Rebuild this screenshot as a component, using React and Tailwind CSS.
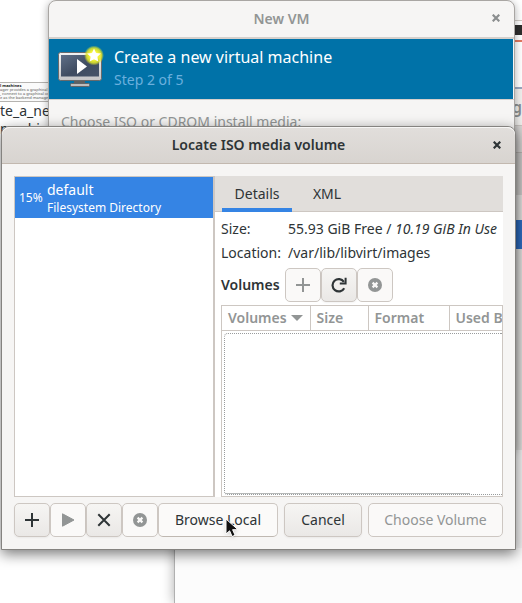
import React from "react";

function CloseIcon() {
  return (
    <svg viewBox="0 0 8 8" className="size-2" fill="none" stroke="currentColor" strokeWidth="2.2" aria-hidden="true">
      <path d="M.7.7 7.3 7.3M7.3.7.7 7.3" />
    </svg>
  );
}

function PlusIcon() {
  return (
    <svg viewBox="0 0 16 16" className="size-4" fill="none" stroke="currentColor" strokeWidth="2" aria-hidden="true">
      <path d="M8 1v14M1 8h14" />
    </svg>
  );
}

function StopIcon() {
  return (
    <svg viewBox="0 0 16 16" className="size-4" aria-hidden="true">
      <circle cx="8" cy="8" r="7" fill="currentColor" />
      <path d="m5.6 5.6 4.8 4.8m0-4.8-4.8 4.8" stroke="#faf9f8" strokeWidth="2.2" />
    </svg>
  );
}

function PlayIcon() {
  return (
    <svg viewBox="0 0 16 16" className="size-4" fill="currentColor" stroke="currentColor" strokeLinejoin="round" aria-hidden="true">
      <path d="M2.500 1.800v12.400L14 8z" />
    </svg>
  );
}

function CrossIcon() {
  return (
    <svg viewBox="0 0 16 16" className="size-4" fill="none" stroke="currentColor" strokeWidth="2" aria-hidden="true">
      <path d="m2.300 2.300 11.400 11.400m0-11.400L2.300 13.700" />
    </svg>
  );
}

function RefreshIcon() {
  return (
    <svg viewBox="0 0 16 16" className="size-4" fill="none" stroke="currentColor" strokeWidth="2.2" aria-hidden="true">
      <path d="M13.200 11.200A6.200 6.200 0 1 1 12.900 4.800" />
      <path d="M15.600.8v6.800H8.800V5.600h4.800V.8z" fill="currentColor" stroke="none" />
    </svg>
  );
}

function MonitorLogo() {
  return (
    <svg viewBox="0 0 48 48" className="size-12 shrink-0" aria-hidden="true">
      <defs>
        <linearGradient id="frame" x1="0" y1="0" x2="0" y2="1">
          <stop offset="0" stopColor="#f4f4f4" />
          <stop offset="1" stopColor="#c4c4c6" />
        </linearGradient>
        <linearGradient id="screen" x1="0" y1="0" x2="1" y2="1">
          <stop offset="0" stopColor="#5f6f87" />
          <stop offset=".55" stopColor="#3f4c61" />
          <stop offset="1" stopColor="#465369" />
        </linearGradient>
        <radialGradient id="glow">
          <stop offset="0" stopColor="#fff" />
          <stop offset=".45" stopColor="#f6f437" />
          <stop offset=".75" stopColor="#dfe62a" stopOpacity=".85" />
          <stop offset="1" stopColor="#dfe62a" stopOpacity="0" />
        </radialGradient>
      </defs>
      <path d="M18 37h11v5H18z" fill="#5d6062" />
      <rect x="14.500" y="40.500" width="19" height="3" rx="1" fill="#bdbdbd" stroke="#626567" />
      <rect x="2.500" y="9.500" width="43" height="28" rx="2" fill="url(#frame)" stroke="#686a6c" />
      <rect x="5" y="12" width="38" height="21.500" fill="url(#screen)" />
      <path d="M21 16v15l10-7.500z" fill="#fff" />
      <circle cx="38" cy="12.500" r="10" fill="url(#glow)" />
      <path d="m38 5.500 2 4.400 4.900.6-3.600 3.300 1 4.800-4.300-2.400-4.300 2.400 1-4.800-3.600-3.300 4.900-.6z" fill="#fff" />
    </svg>
  );
}

function Pointer() {
  return (
    <svg viewBox="0 0 14 20" className="pointer-events-none absolute top-[15px] left-[67px] h-5 w-3.5 drop-shadow" aria-hidden="true">
      <path d="M1 1v15l3.600-3.200 2.500 5.700 3-1.300-2.500-5.500H13z" fill="#111" stroke="#fff" />
    </svg>
  );
}

const button = "flex h-[34px] items-center justify-center rounded-[5px] border ";
const textButton = "pb-0.5 ";
const active = "border-[#cdc7c2] bg-linear-to-b from-[#f6f5f3] to-[#eae8e6] text-[#2e3436] shadow-xs";
const disabled = "border-[#cdc7c2] bg-[#faf9f8] text-[#929595]";

function IconButton({ label, off, children }) {
  return (
    <button type="button" aria-label={label} disabled={off} className={button + "w-9 " + (off ? disabled : active)}>
      {children}
    </button>
  );
}

function Backdrop() {
  return (
    <div className="absolute inset-0 overflow-hidden bg-white">
      <div className="absolute top-[82px] left-0 border-y border-[#b5b3b0] bg-[#fafafa]">
        <div className="h-[18px] pt-px text-[4px] leading-[4px] whitespace-nowrap text-[#555]">
          <b className="text-[#111]">l machines</b>
          <p>ager provides a graphical tool for admin</p>
          <p>, connect to a graphical or serial console</p>
          <p>e as the backend management API.</p>
        </div>
      </div>
      <div className="absolute top-[102px] left-0 text-[14px] leading-[18px] whitespace-nowrap text-[#2e3436]">
        <p>te_a_new</p>
        <p>machine</p>
      </div>
      <div className="absolute top-0 left-[73px] h-2 w-px bg-[#888]" />
      <div className="absolute top-[500px] right-0 bottom-0 left-[174px] border-l border-[#b0b0b0] bg-[#fcfcfc] shadow-[0_0_12px_#0005]" />
      <div className="absolute top-0 right-0 flex h-[548px] w-3 flex-col bg-[#e6e5e3]">
        <div className="h-5 bg-white" />
        <div className="h-[5px] border-t border-[#cfcac5] bg-white" />
        <div className="h-[10px] bg-[#2d2d2d]" />
        <div className="h-[5px] bg-white" />
        <div className="h-[2px] bg-[#e07860]" />
        <div className="h-[47px] border-b-2 border-[#99a7bf] bg-white" />
        <div className="h-[37px] border-b border-[#c9c5c1] bg-[#f0efed] pt-2 pl-0.5 text-[16px] leading-5 font-semibold text-[#8b8e8f]">g</div>
        <div className="h-[27px] border-b border-[#bbb7b3] bg-[#d9d7d5]" />
        <div className="h-[42px] bg-[#cfcdcb]" />
        <div className="h-[25px] bg-[#e6e5e3]" />
        <div className="h-[29px] bg-[#2f6fc5]" />
        <div className="h-[201px]" />
        <div className="grow bg-[#f5f5f5]" />
      </div>
    </div>
  );
}

function NewVmWindow() {
  return (
    <section className="absolute top-0 right-[7px] left-[48px] h-[450px] rounded-t-lg border border-[#a9a6a3] bg-[#f6f5f4] shadow-[0_2px_8px_#0005]">
      <header className="relative flex h-[38px] items-center justify-center border-b-2 border-[#d5d0cc] pb-0.5 text-[14px] font-semibold text-[#929595]">
        <h2>New VM</h2>
        <button type="button" aria-label="Close New VM" className="absolute right-[13px] p-px text-[#8b8e8f]"><CloseIcon /></button>
      </header>
      <div className="mr-px flex h-[60px] gap-2.5 bg-[#0072a8] pt-1 pl-[7px]">
        <MonitorLogo />
        <div className="pt-0.5">
          <h3 className="text-[16px] leading-6 text-white">Create a new virtual machine</h3>
          <p className="text-[14px] leading-[22px] text-[#6bb0de]">Step 2 of 5</p>
        </div>
      </div>
      <p className="border-t border-[#d5d0cc] pt-3 pl-3 text-[14px] leading-5 text-[#929595]">Choose ISO or CDROM install media:</p>
    </section>
  );
}

function PoolList() {
  return (
    <ul className="w-[201px] shrink-0 border border-r-2 border-[#cdc7c2] bg-white">
      <li className="flex h-[41px] items-center gap-1 bg-[#3584e4] pl-1 text-white">
        <span className="w-6 text-[12px]">15%</span>
        <div className="whitespace-nowrap">
          <p className="text-[14px] leading-5">default</p>
          <p className="text-[12px] leading-4">Filesystem Directory</p>
        </div>
      </li>
    </ul>
  );
}

function VolumePanel() {
  return (
    <div className="flex min-w-0 grow flex-col bg-white">
      <div role="tablist" className="flex h-9 shrink-0 border-b border-[#cdc7c2] bg-[#e1dedb] pl-[7px] text-[14px]">
        <button type="button" role="tab" aria-selected="true" className="h-9 w-[70px] border-b-4 border-[#3584e4] pt-0.5">Details</button>
        <button type="button" role="tab" aria-selected="false" className="h-9 w-[70px] border-b-4 border-transparent pt-0.5">XML</button>
      </div>
      <dl className="grid grid-cols-[67px_1fr] pt-[5px] pl-1.5 text-[14px] leading-6 whitespace-nowrap">
        <dt>Size:</dt>
        <dd>55.93 GiB Free / <em>10.19 GiB In Use</em></dd>
        <dt>Location:</dt>
        <dd>/var/lib/libvirt/images</dd>
      </dl>
      <div className="flex items-center pt-[3px] pl-1.5">
        <h3 className="w-16 pb-0.5 text-[14px] font-semibold">Volumes</h3>
        <IconButton label="Add volume" off><PlusIcon /></IconButton>
        <IconButton label="Refresh volumes"><RefreshIcon /></IconButton>
        <IconButton label="Delete volume" off><StopIcon /></IconButton>
      </div>
      <div className="mt-[3px] ml-1.5 flex grow flex-col overflow-hidden border border-[#cdc7c2]">
        <table className="w-[350px] table-fixed text-left text-[14px] leading-6 text-[#929595]">
          <thead>
            <tr className="border-b border-[#cdc7c2]">
              <th className="w-[88px] border-r border-[#cdc7c2] pl-1.5 font-semibold">
                <span className="flex items-center gap-1">
                  Volumes
                  <svg viewBox="0 0 12 6" className="h-1.5 w-3" fill="currentColor" aria-hidden="true"><path d="M0 0h12L6 6z" /></svg>
                </span>
              </th>
              <th className="w-[58px] border-r border-[#cdc7c2] pl-1.5 font-semibold">Size</th>
              <th className="w-[81px] border-r border-[#cdc7c2] pl-1.5 font-semibold">Format</th>
              <th className="pl-1.5 font-semibold">Used By</th>
            </tr>
          </thead>
        </table>
        <div className="mt-0.5 mb-px ml-0.5 flex grow flex-col justify-end rounded-l-sm border border-r-0 border-dotted border-[#999c9d]">
          <div className="mr-8 h-px bg-[#b5b8b8]" />
        </div>
      </div>
    </div>
  );
}

function LocateDialog() {
  return (
    <section role="dialog" aria-labelledby="dialog-title" className="absolute top-[126px] right-[6px] left-px rounded-t-lg border border-[#858380] bg-[#f6f5f4] shadow-[0_4px_14px_#0008]">
      <header className="relative flex h-[37px] items-center justify-center rounded-t-lg border-t border-b border-t-[#f7f6f5] border-b-[#c2b8af] bg-linear-to-b from-[#e1dedb] to-[#d8d4d0] pb-0.5 text-[14px] font-semibold">
        <h1 id="dialog-title">Locate ISO media volume</h1>
        <button type="button" aria-label="Close dialog" className="absolute right-[13px] p-px"><CloseIcon /></button>
      </header>
      <div className="flex flex-col gap-1.5 p-3">
        <div className="flex h-[321px]">
          <PoolList />
          <VolumePanel />
        </div>
        <div className="flex text-[14px]">
          <IconButton label="Add pool"><PlusIcon /></IconButton>
          <IconButton label="Start pool" off><PlayIcon /></IconButton>
          <IconButton label="Stop pool"><CrossIcon /></IconButton>
          <IconButton label="Delete pool" off><StopIcon /></IconButton>
          <div className="relative mr-1.5 w-[120px]">
            <button type="button" className={button + textButton + "w-full border-[#cdc7c2] border-b-[#bfb8b1] bg-[#fbfaf9]"}>Browse Local</button>
            <Pointer />
          </div>
          <button type="button" className={button + textButton + "mr-1.5 w-[78px] " + active}>Cancel</button>
          <button type="button" disabled className={button + textButton + "grow " + disabled}>Choose Volume</button>
        </div>
      </div>
    </section>
  );
}

export default function App() {
  return (
    <main className="relative h-screen overflow-hidden font-['Noto_Sans','Open_Sans',sans-serif] text-[#2e3436]">
      <Backdrop />
      <NewVmWindow />
      <LocateDialog />
    </main>
  );
}
